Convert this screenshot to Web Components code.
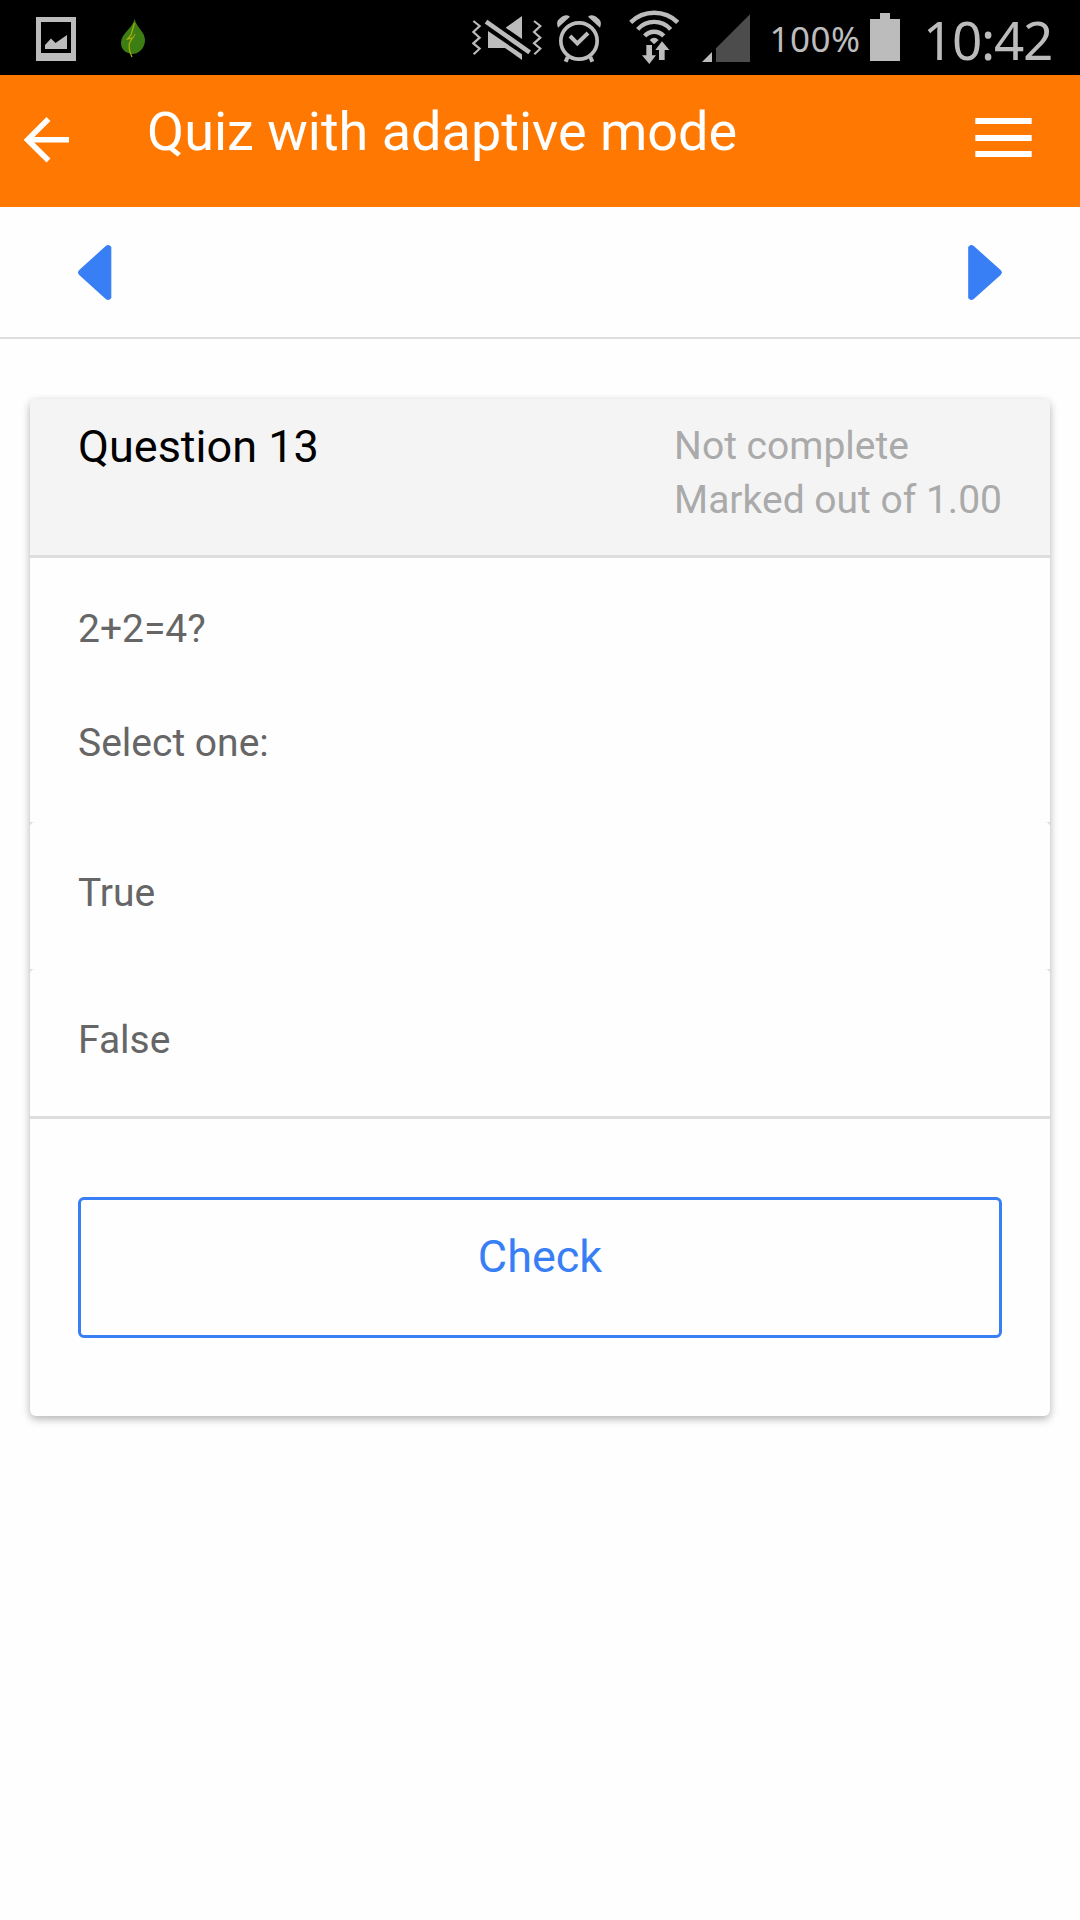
<!DOCTYPE html>
<html lang="en">
<head>
<meta charset="utf-8">
<title>Quiz with adaptive mode</title>
<style>
  body {
    margin: 0;
    background: #fefefe;
    font-family: Roboto, "Noto Sans", sans-serif;
  }
</style>
</head>
<body>
<quiz-app></quiz-app>

<script>
class StatusBar extends HTMLElement {
  connectedCallback() {
    this.attachShadow({ mode: 'open' });
    this.shadowRoot.innerHTML = `
      <style>
        :host {
          display: flex;
          box-sizing: border-box;
          height: 75px;
          padding: 0 29px 0 36px;
          background: #000;
          color: #bcbcbc;
          font-family: "Noto Sans", sans-serif;
          white-space: nowrap;
        }

        .group {
          display: flex;
          align-items: flex-start;
        }

        .right {
          margin-left: auto;
        }

        svg {
          display: block;
          height: 75px;
          fill: #bcbcbc;
          flex: none;
        }

        .line {
          fill: none;
          stroke: #bcbcbc;
        }

        .level {
          width: 88px;
          margin-left: 21px;
          font-size: 35px;
          line-height: 78px;
          letter-spacing: 0.5px;
          text-indent: -1.5px;
        }

        .battery {
          margin-left: 11px;
        }

        .time {
          width: 124px;
          margin-left: 27px;
          font-size: 53px;
          line-height: 79px;
          letter-spacing: -1.3px;
          text-indent: -4px;
        }
      </style>

      <div class="group">
        <svg width="40" viewBox="36 0 40 75">
          <path fill-rule="evenodd" d="M36 17h40v44H36zM41 22v31h30V22z"/>
          <path d="M45 49v-4l6-6.5 4.5 4.5L67 35v14z"/>
        </svg>
        <svg width="25" viewBox="120 0 25 75" style="margin-left: 44px">
          <path fill="#3c7d14" d="M134.5 19C133 28 121 33 121 43c0 7 5 10 11 11 7 0 13-6 13-14 0-8-8-12-10.500-21z"/>
          <path fill="none" stroke="#a3ad0a" stroke-width="1.300" d="M134.500 23L131 35l-3.500 4 5-1-3 5c-1 5 0 9 2.500 14"/>
          <path fill="none" stroke="#a3ad0a" stroke-width="1" d="M135 34l-2 4"/>
        </svg>
      </div>

      <div class="group right">
        <svg width="70" viewBox="36 0 210 225">
          <path class="line" stroke-width="6.500" d="M40 63l19 15-19 18 19 17-19 17 19 16-18 17M222 63l19 15-19 18 19 17-19 17 19 16-18 17"/>
          <path d="M137 83l49-35v69zM84 93l102 70v17l-51-36H84z"/>
          <path class="line" stroke-width="14" d="M78 65l131 92"/>
        </svg>
        <svg width="44" viewBox="291 0 132 225" style="margin-left: 15px">
          <circle class="line" cx="357" cy="123" r="54.500" stroke-width="11"/>
          <path class="line" stroke-width="12" d="M330 108l22 22 32-31M323 171l-6 14M391 171l6 14"/>
          <path d="M294 83c-5-14-3-22 7-29 10-9 20-11 29-4zM420 83c5-14 3-22-7-29-10-9-20-11-29-4z"/>
        </svg>
        <svg width="50" viewBox="507 0 150 225" style="margin-left: 28px">
          <path class="line" stroke-width="13" d="M512 67A101 101 0 0 1 653 67M533 88A66 66 0 0 1 632 88M554 108A38 38 0 0 1 611 108"/>
          <path d="M569 120q13-13 27 0l-14 13z"/>
          <path stroke="#000" stroke-width="6" paint-order="stroke" d="M559 135h17v31h12l-20 26-22-26h13zM606 124l22 26h-14v30h-17v-30h-11z"/>
        </svg>
        <svg width="48" viewBox="726 0 144 225" style="margin-left: 23px">
          <path d="M726 186l30-30v30z"/>
          <path fill="#4c4c4c" d="M768 145L870 43v143H768z"/>
        </svg>
        <div class="level">100%</div>
        <svg class="battery" width="30" viewBox="870 0 30 75">
          <path d="M880 13h10v6h10v42h-30V19h10z"/>
        </svg>
        <div class="time">10:42</div>
      </div>
    `;
  }
}

class AppHeader extends HTMLElement {
  connectedCallback() {
    this.attachShadow({ mode: 'open' });
    this.shadowRoot.innerHTML = `
      <style>
        :host {
          display: flex;
          box-sizing: border-box;
          height: 132px;
          padding: 0 48px 0 24px;
          background: #ff7902;
          color: #fff;
        }

        svg {
          display: block;
          flex: none;
        }

        .back {
          margin-top: 41px;
        }

        .menu {
          margin-top: 43px;
        }

        h1 {
          flex: 1;
          margin: 0 0 0 77px;
          font-size: 54px;
          font-weight: 400;
          line-height: 113px;
        }
      </style>

      <svg class="back" width="46" height="48" viewBox="24 116 46 48" fill="none" stroke="#fff" stroke-width="5.500">
        <path d="M48.500 119L27.500 139.800l21 20.700M28 139.800h41"/>
      </svg>
      <h1><slot></slot></h1>
      <svg class="menu" width="57" height="40" viewBox="0 0 57 40" fill="#fff">
        <path d="M0.300 0h56.400v6H0.300zM0.300 17h56.400v6H0.300zM0.300 33h56.400v6H0.300z"/>
      </svg>
    `;
  }
}

class QuestionNav extends HTMLElement {
  connectedCallback() {
    this.attachShadow({ mode: 'open' });
    this.shadowRoot.innerHTML = `
      <style>
        :host {
          display: flex;
          justify-content: space-between;
          align-items: flex-start;
          box-sizing: border-box;
          height: 132px;
          padding: 37px 78px 0;
          border-bottom: 2px solid #ddd;
          background: #fefefe;
        }

        svg {
          display: block;
          fill: #387ef5;
        }
      </style>

      <svg width="34" height="57" viewBox="0 0 34 57">
        <path d="M1.200 26L28 1.800q3-2 5.300 1.200v51q-2.300 3.200-5.300 1.200L1.200 31q-2.400-2.500 0-5z"/>
      </svg>
      <svg width="34" height="57" viewBox="0 0 34 57">
        <path d="M32.600 26L5.500 1.800Q2.500-.2.200 3v51q2.300 3.200 5.300 1.200L32.600 31q2.400-2.500 0-5z"/>
      </svg>
    `;
  }
}

class QuestionCard extends HTMLElement {
  connectedCallback() {
    this.attachShadow({ mode: 'open' });
    this.shadowRoot.innerHTML = `
      <style>
        :host {
          display: block;
          margin: 60px 30px;
          border-radius: 6px;
          background: #fefefe;
          box-shadow: 0 3px 9px rgba(0, 0, 0, 0.3);
        }

        header {
          display: flex;
          justify-content: space-between;
          box-sizing: border-box;
          height: 159px;
          padding: 20px 48px 0;
          border-bottom: 3px solid #ddd;
          border-radius: 6px 6px 0 0;
          background: #f4f4f4;
        }

        h2 {
          margin: 0;
          color: #000;
          font-size: 45px;
          font-weight: 400;
          line-height: 55px;
        }

        .info {
          color: #aaa;
          font-size: 39px;
          line-height: 54px;
        }

        .text {
          display: flex;
          flex-direction: column;
          gap: 60px;
          box-sizing: border-box;
          height: 264px;
          padding: 44px 48px 0;
          color: #666;
          font-size: 39px;
          line-height: 54px;
        }

        footer {
          padding: 78px 48px;
          border-top: 3px solid #ddd;
        }
      </style>

      <header>
        <h2><slot name="number"></slot></h2>
        <div class="info"><slot name="info"></slot></div>
      </header>
      <div class="text"><slot name="text"></slot></div>
      <slot></slot>
      <footer><slot name="action"></slot></footer>
    `;
  }
}

class AnswerOption extends HTMLElement {
  connectedCallback() {
    this.attachShadow({ mode: 'open' });
    this.shadowRoot.innerHTML = `
      <style>
        :host {
          display: block;
          background: linear-gradient(#ddd 4px, #fefefe 4px);
          color: #666;
          font-size: 39px;
          line-height: 54px;
        }

        div {
          box-sizing: border-box;
          height: 147px;
          padding: 44px 48px 0;
          border-radius: 5px 5px 0 0;
          background: #fefefe;
        }
      </style>

      <div><slot></slot></div>
    `;
  }
}

class OutlineButton extends HTMLElement {
  connectedCallback() {
    this.attachShadow({ mode: 'open' });
    this.shadowRoot.innerHTML = `
      <style>
        :host {
          display: block;
        }

        button {
          display: flex;
          justify-content: center;
          align-items: flex-start;
          box-sizing: border-box;
          width: 100%;
          height: 141px;
          padding: 0;
          border: 3px solid #387ef5;
          border-radius: 6px;
          background: transparent;
          color: #387ef5;
          font: 400 45px/114px Roboto, sans-serif;
        }
      </style>

      <button type="button"><slot></slot></button>
    `;
  }
}

class QuizApp extends HTMLElement {
  connectedCallback() {
    this.attachShadow({ mode: 'open' });
    this.shadowRoot.innerHTML = `
      <style>
        :host {
          display: block;
          height: 1920px;
          overflow: hidden;
          background: #fefefe;
        }

        p {
          margin: 0;
        }
      </style>

      <status-bar></status-bar>
      <app-header>Quiz with adaptive mode</app-header>
      <question-nav></question-nav>
      <question-card>
        <span slot="number">Question 13</span>
        <p slot="info">Not complete</p>
        <p slot="info">Marked out of 1.00</p>
        <p slot="text">2+2=4?</p>
        <p slot="text">Select one:</p>
        <answer-option>True</answer-option>
        <answer-option>False</answer-option>
        <outline-button slot="action">Check</outline-button>
      </question-card>
    `;
  }
}

customElements.define('status-bar', StatusBar);
customElements.define('app-header', AppHeader);
customElements.define('question-nav', QuestionNav);
customElements.define('question-card', QuestionCard);
customElements.define('answer-option', AnswerOption);
customElements.define('outline-button', OutlineButton);
customElements.define('quiz-app', QuizApp);
</script>
</body>
</html>
